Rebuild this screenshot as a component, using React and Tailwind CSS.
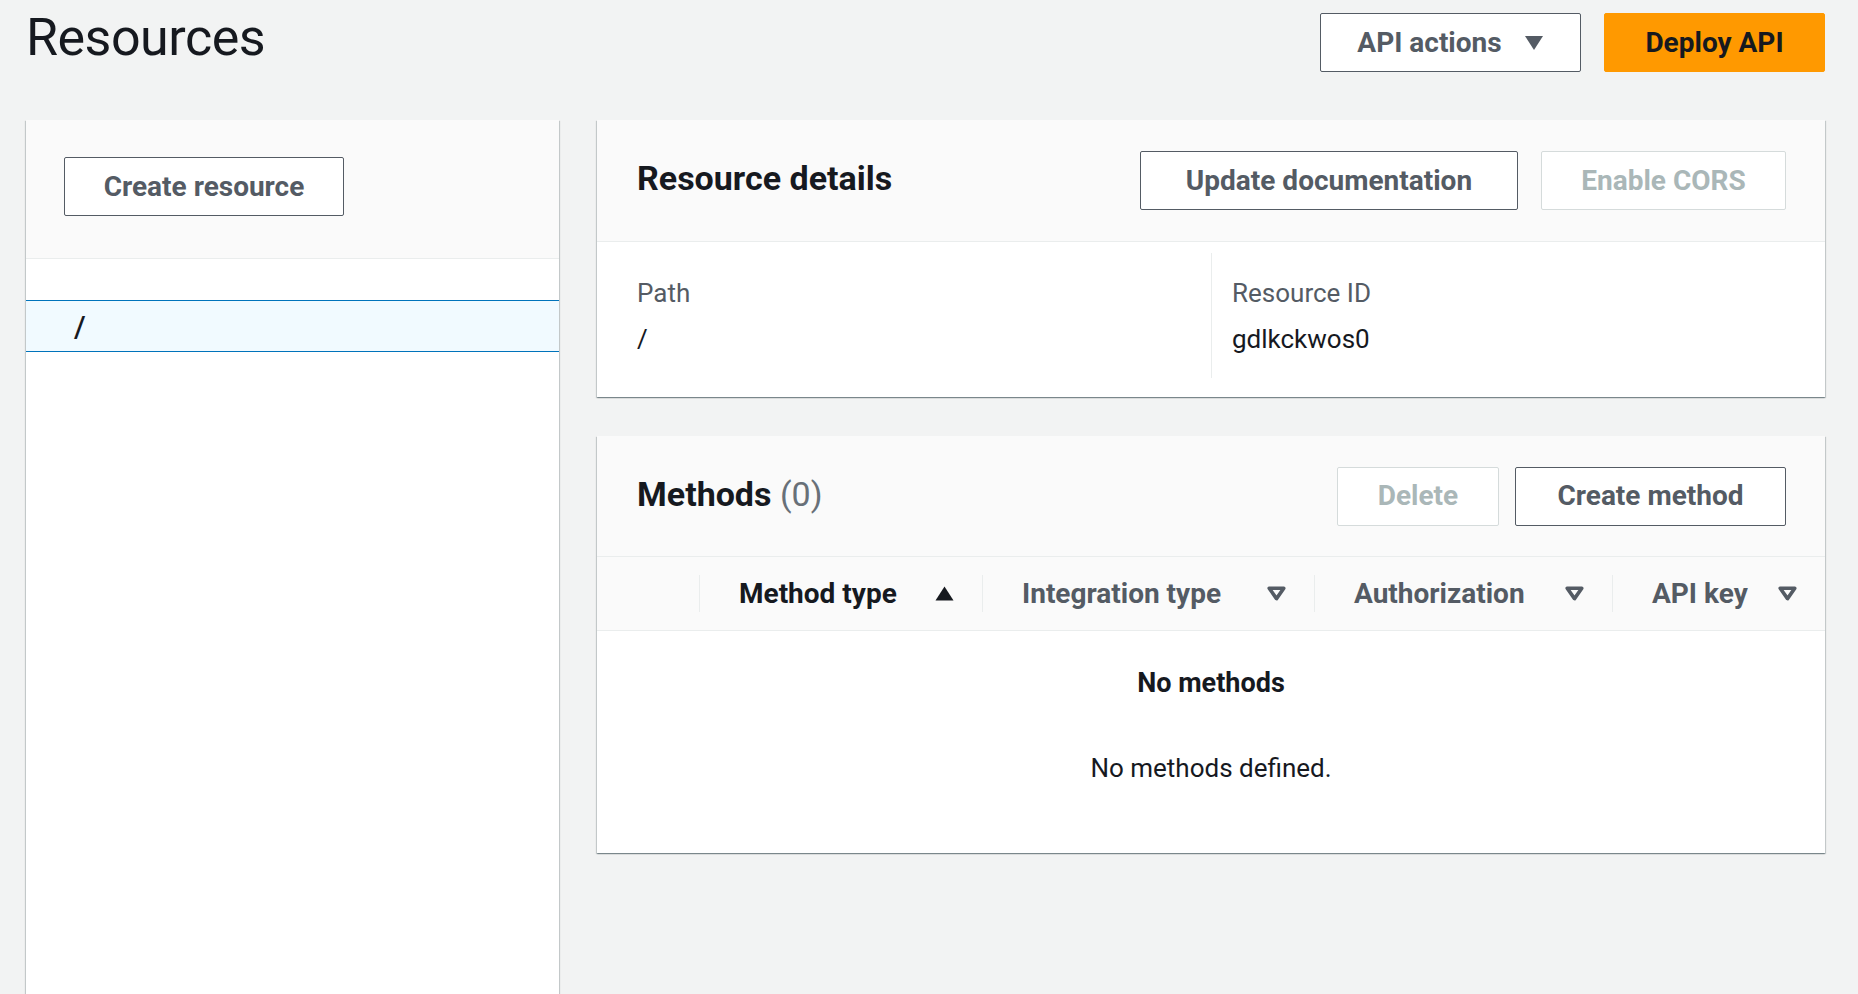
const font = { fontFamily: 'Roboto, "Noto Sans", sans-serif' };

const CaretDown = () => (
    <svg width="20" height="16" viewBox="0 0 20 16" className="shrink-0">
        <polygon points="1,1 19,1 10,15" fill="#545b64" />
    </svg>
);

const SortAsc = () => (
    <svg width="19" height="15" viewBox="0 0 19 15" className="shrink-0">
        <polygon points="9.5,0.5 18.5,14.5 0.5,14.5" fill="#16191f" />
    </svg>
);

const SortNone = () => (
    <svg width="19" height="15" viewBox="0 0 19 15" className="shrink-0">
        <polygon points="2.2,2.2 16.8,2.2 9.5,12.6" fill="none" stroke="#545b64" strokeWidth="3.6" strokeLinejoin="round" />
    </svg>
);

const Button = ({ children, className = '', disabled = false }) => (
    <button
        className={
            'h-[59px] rounded-[2px] border text-[28px] font-bold leading-none flex items-center justify-center ' +
            (disabled ? 'border-[#d5dbdb] text-[#aab7b8] bg-white ' : 'border-[#545b64] text-[#545b64] bg-white ') +
            className
        }
    >
        {children}
    </button>
);

const panelShadow = 'shadow-[0_1px_1px_0_rgba(0,28,36,0.3),1px_1px_1px_0_rgba(0,28,36,0.15),-1px_1px_1px_0_rgba(0,28,36,0.15)]';

const HeaderCell = ({ label, active, icon, className = '' }) => (
    <div className={'flex items-center ' + className}>
        <span className="w-px h-[37px] bg-[#eaeded] shrink-0" />
        <div className="flex-1 flex items-center justify-between pl-[39px] pr-[28px]">
            <span className={'text-[28px] font-bold ' + (active ? 'text-[#16191f]' : 'text-[#545b64]')}>{label}</span>
            {icon}
        </div>
    </div>
);

export default function App() {
    return (
        <div className="h-screen overflow-hidden bg-[#f2f3f3] pl-[26px] pr-[33px] pt-[8px]" style={font}>
            {/* Page header */}
            <div className="flex items-start justify-between">
                <h1 className="text-[52px] leading-[60px] tracking-[-0.5px] text-[#16191f] font-normal">Resources</h1>
                <div className="flex gap-[23px] mt-[5px]">
                    <Button className="w-[261px] gap-[22px]">
                        <span>API actions</span>
                        <CaretDown />
                    </Button>
                    <button className="h-[59px] w-[221px] rounded-[2px] bg-[#ff9900] border border-[#ff9900] text-[#16191f] text-[28px] font-bold">
                        Deploy API
                    </button>
                </div>
            </div>

            <div className="mt-[48px] flex gap-[38px] items-start">
                {/* Resource tree */}
                <div className={'w-[533px] h-[900px] bg-white shrink-0 ' + panelShadow}>
                    <div className="bg-[#fafafa] border-b border-[#eaeded] pl-[38px] pt-[37px] pb-[42px]">
                        <Button className="w-[280px] h-[58px]">Create resource</Button>
                    </div>
                    <div className="mt-[41px] h-[52px] bg-[#f1faff] border-y border-[#0073bb] flex items-center pl-[48px]">
                        <span className="text-[30px] font-medium text-[#16191f]">/</span>
                    </div>
                </div>

                <div className="flex-1 flex flex-col gap-[39px]">
                    {/* Resource details */}
                    <div className={'bg-white ' + panelShadow}>
                        <div className="bg-[#fafafa] border-b border-[#eaeded] h-[122px] flex items-center justify-between pl-[40px] pr-[39px]">
                            <h2 className="text-[34px] font-bold text-[#16191f] -mt-[4px]">Resource details</h2>
                            <div className="flex gap-[23px]">
                                <Button className="w-[378px]">Update documentation</Button>
                                <Button className="w-[245px]" disabled>Enable CORS</Button>
                            </div>
                        </div>
                        <div className="grid grid-cols-2 px-[40px] pt-[11px] pb-[19px]">
                            <div className="h-[125px] pt-[23px]">
                                <div className="text-[26px] leading-[34px] text-[#545b64]">Path</div>
                                <div className="text-[26px] leading-[34px] text-[#16191f] mt-[12px]">/</div>
                            </div>
                            <div className="h-[125px] pt-[23px] border-l border-[#eaeded] pl-[20px]">
                                <div className="text-[26px] leading-[34px] text-[#545b64]">Resource ID</div>
                                <div className="text-[26px] leading-[34px] text-[#16191f] mt-[12px]">gdlkckwos0</div>
                            </div>
                        </div>
                    </div>

                    {/* Methods */}
                    <div className={'bg-white ' + panelShadow}>
                        <div className="bg-[#fafafa] border-b border-[#eaeded] h-[121px] flex items-center justify-between pl-[40px] pr-[39px]">
                            <h2 className="text-[34px] font-bold text-[#16191f] -mt-[4px]">
                                Methods <span className="font-normal text-[#687078]">(0)</span>
                            </h2>
                            <div className="flex gap-[16px]">
                                <Button className="w-[162px]" disabled>Delete</Button>
                                <Button className="w-[271px]">Create method</Button>
                            </div>
                        </div>
                        <div className="bg-[#fafafa] border-b border-[#eaeded] h-[74px] flex items-center">
                            <div className="w-[102px] shrink-0" />
                            <HeaderCell className="w-[283px]" label="Method type" active icon={<SortAsc />} />
                            <HeaderCell className="w-[332px]" label="Integration type" icon={<SortNone />} />
                            <HeaderCell className="w-[298px]" label="Authorization" icon={<SortNone />} />
                            <HeaderCell className="flex-1" label="API key" icon={<SortNone />} />
                        </div>
                        <div className="h-[222px] flex flex-col items-center pt-[35px]">
                            <div className="text-[27px] leading-[34px] font-bold text-[#16191f]">No methods</div>
                            <div className="text-[26px] leading-[34px] text-[#16191f] mt-[51px]">No methods defined.</div>
                        </div>
                    </div>
                </div>
            </div>
        </div>
    );
}
